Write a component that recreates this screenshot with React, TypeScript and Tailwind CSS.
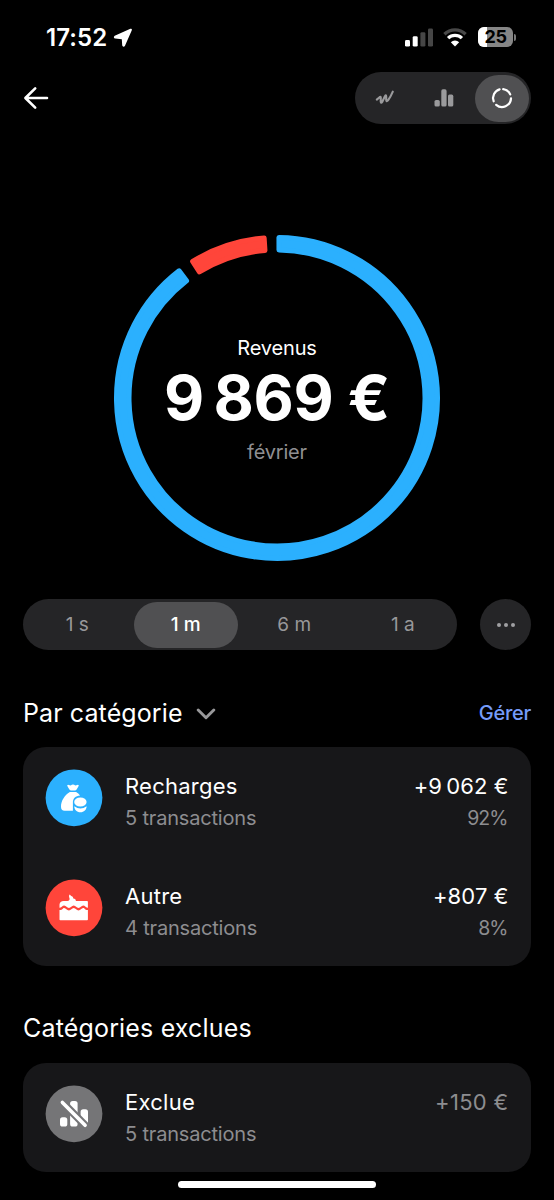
import type { ReactNode } from 'react'

const CX = 164
const CY = 164

function point(radius: number, degrees: number) {
  const a = (degrees * Math.PI) / 180
  return `${(CX + radius * Math.sin(a)).toFixed(2)} ${(CY - radius * Math.cos(a)).toFixed(2)}`
}

/* Ring segment, inset by the width of its rounded outline. */
function Segment({ from, to, color }: { from: number; to: number; color: string }) {
  const inset = 2.5
  const outer = 163 - inset
  const inner = 145.5 + inset
  const o = (inset / outer) * (180 / Math.PI)
  const i = (inset / inner) * (180 / Math.PI)
  const large = to - from > 180 ? 1 : 0
  const d = `M${point(outer, from + o)} A${outer} ${outer} 0 ${large} 1 ${point(outer, to - o)} L${point(inner, to - i)} A${inner} ${inner} 0 ${large} 0 ${point(inner, from + i)} Z`
  return <path d={d} fill={color} stroke={color} strokeWidth={inset * 2} strokeLinejoin="round" />
}

function StatusBar() {
  return (
    <div className="flex h-[72px] shrink-0 items-start justify-between pl-[46px] pr-[37px] pt-[22px]">
      <div className="flex items-center">
        <span className="w-[67px] pt-px text-[24px] leading-[30px] font-semibold tracking-[0.1px]">17:52</span>
        <svg width="20" height="20" viewBox="0 0 20 20">
          <path d="M17.8 1.8 2.2 8.8Q1.6 9.3 2.4 9.5L8.9 10.1Q9.8 10.2 9.9 11.1L10.3 17.2Q10.5 18 11 17.3Z" fill="white" stroke="white" strokeWidth="2.2" strokeLinejoin="round" />
        </svg>
      </div>
      <div className="flex items-center pt-[5px]">
        <svg width="28" height="19" viewBox="0 0 28 19">
          <rect x="0" y="12" width="5" height="6.6" rx="1.4" fill="white" />
          <rect x="7.7" y="8.2" width="5" height="10.4" rx="1.4" fill="white" />
          <rect x="15.4" y="4.2" width="5" height="14.4" rx="1.4" fill="#464646" />
          <rect x="23" y="0.6" width="5" height="18" rx="1.4" fill="#464646" />
        </svg>
        <svg width="24" height="19" viewBox="0 0 24 19" className="ml-[10px]" fill="none">
          <path d="M1.4 6.2A15.2 15.2 0 0 1 22.6 6.2" stroke="#484848" strokeWidth="3.3" />
          <path d="M5.1 10.2A9.8 9.8 0 0 1 18.9 10.2" stroke="white" strokeWidth="3.3" />
          <path d="M12 18.5 7.8 14.2A6 6 0 0 1 16.2 14.2Z" fill="white" />
        </svg>
        <div className="relative ml-[11px] flex h-[20px] w-[35px] items-center justify-center overflow-hidden rounded-[6px] bg-[#868686]">
          <span className="absolute inset-y-0 left-0 w-[9px] bg-white" />
          <span className="relative text-[18px] leading-[20px] font-bold tracking-[-0.3px] text-black">25</span>
        </div>
        <span className="ml-[1px] mr-px h-[7px] w-[2px] rounded-r-full bg-[#7a7a7a]" />
      </div>
    </div>
  )
}

function Toolbar() {
  return (
    <div className="flex h-[52px] shrink-0 items-center justify-between px-[23px]">
      <svg width="26" height="24" viewBox="0 0 26 24" fill="none" stroke="white" strokeWidth="2.6" strokeLinecap="round" strokeLinejoin="round">
        <path d="M24 12H2.6M12.2 2.3 2.4 12 12.2 21.7" />
      </svg>
      <div className="flex h-[52px] w-[176px] items-center rounded-full bg-[#252527] p-[2.5px]">
        <div className="flex flex-1 justify-center">
          <svg width="20" height="16" viewBox="0 0 20 16" fill="none" stroke="#9a9a9c" strokeWidth="2.1" strokeLinecap="round" strokeLinejoin="round" className="-ml-[4px]">
            <path d="M1.8 9.6 4.6 7.2Q5.9 6.2 5.8 8L5.7 11.6Q6 13.8 7.2 12L9.9 6.3Q11.2 4.3 11.2 6.6V9.8Q11.4 12.2 13 10.4 15.6 6.8 17.8 1.6" />
          </svg>
        </div>
        <div className="flex flex-1 justify-center">
          <svg width="20" height="18" viewBox="0 0 20 18" fill="#9a9a9c" className="-ml-[3px]">
            <rect x="0.5" y="11" width="5.3" height="6.6" rx="1.6" />
            <rect x="7.3" y="0.3" width="5.3" height="17.3" rx="1.6" />
            <rect x="14" y="5.6" width="5.3" height="12" rx="1.6" />
          </svg>
        </div>
        <div className="flex h-[47px] w-[54px] items-center justify-center rounded-full bg-[#505052]">
          <svg width="22" height="22" viewBox="0 0 22 22" fill="none" stroke="white" strokeWidth="2.2" strokeLinecap="round">
            <path d="M12.2 2.1A9 9 0 0 1 19.2 7.4" />
            <path d="M20 11.4A9 9 0 0 1 5.2 17.8" />
            <path d="M2.7 14.3A9 9 0 0 1 8.6 2.4" />
          </svg>
        </div>
      </div>
    </div>
  )
}

function Donut() {
  return (
    <div className="mx-auto mt-[109.5px] grid h-[328px] w-[328px] shrink-0 place-items-center">
      <svg width="328" height="328" viewBox="0 0 328 328" className="col-start-1 row-start-1">
        <Segment from={-0.2} to={323.3} color="#2bb0fe" />
        <Segment from={327.4} to={356.3} color="#ff453a" />
      </svg>
      <div className="col-start-1 row-start-1 flex flex-col items-center pt-[5px] whitespace-nowrap">
        <span className="text-[20px] leading-[26px] tracking-[-0.15px]">Revenus</span>
        <span className="text-[62px] leading-[74px] font-bold tracking-[-0.3px]">9&#8201;869 €</span>
        <span className="mt-[3px] text-[20px] leading-[28px] tracking-[-0.2px] text-[#8f8f92]">février</span>
      </div>
    </div>
  )
}

function RangePicker() {
  const options = ['1 s', '1 m', '6 m', '1 a']
  return (
    <div className="mt-[37.5px] flex h-[51px] shrink-0 justify-between px-[23px]">
      <div className="grid w-[434px] grid-cols-4 gap-[5px] rounded-full bg-[#252527] p-[2.5px] text-[19px] text-[#98989a]">
        {options.map((label) => (
          <div
            key={label}
            className={
              label === '1 m'
                ? 'flex items-center justify-center rounded-full bg-[#505052] pt-[2px] font-medium text-white'
                : 'flex items-center justify-center pt-[2px]'
            }
          >
            {label}
          </div>
        ))}
      </div>
      <div className="flex w-[51px] items-center justify-center gap-[3px] rounded-full bg-[#252527]">
        <span className="size-[4px] rounded-full bg-[#a0a0a2]" />
        <span className="size-[4px] rounded-full bg-[#a0a0a2]" />
        <span className="size-[4px] rounded-full bg-[#a0a0a2]" />
      </div>
    </div>
  )
}

type RowProps = {
  icon: ReactNode
  title: string
  count: string
  amount: string
  share?: string
  muted?: boolean
}

function Row({ icon, title, count, amount, share, muted }: RowProps) {
  return (
    <div className="flex h-[109.5px] items-start pl-[22px] pr-[22.5px] pt-[22px]">
      {icon}
      <div className="ml-[22px] flex flex-1 flex-col pt-[2px]">
        <span className="text-[22px] leading-[30px] tracking-[0.25px]">{title}</span>
        <span className="mt-[2px] text-[20px] leading-[30px] tracking-[-0.18px] text-[#8d8d90]">{count}</span>
      </div>
      <div className="flex flex-col items-end pt-[2px]">
        <span className={muted ? 'text-[22px] leading-[30px] tracking-[0.3px] text-[#8d8d90]' : 'text-[22px] leading-[30px] tracking-[0.1px]'}>{amount}</span>
        {share && <span className="mt-[2px] mr-[0.9px] text-[19.5px] leading-[30px] tracking-[-0.9px] text-[#8d8d90]">{share}</span>}
      </div>
    </div>
  )
}

function MoneyBag() {
  return (
    <svg width="58" height="58" viewBox="0 0 58 58" fill="white" className="shrink-0">
      <circle cx="29" cy="28.8" r="28.4" fill="#2bb0fe" />
      <path d="M22.9 18.1Q21.3 15.6 23.7 15.9L25.7 16.5Q28 14.5 30.3 16.5L32.3 15.9Q34.7 15.6 33.1 18.1L31.6 20.6Q31.2 21.4 30.2 21.4H25.8Q24.8 21.4 24.4 20.6Z" />
      <path d="M24.9 22.9H31.1C32.7 23.8 34 24.9 35.1 26.4 30.6 26.7 27.9 29.4 27.9 33.4V41.7H19.6Q16 41.7 16 37.7C16 31.8 19.5 26.1 24.9 22.9Z" />
      <ellipse cx="35.4" cy="33" rx="6.2" ry="4.6" />
      <path d="M29.3 37.2Q35.4 41.9 41.6 37.2C41.7 40.6 38.9 43.2 35.4 43.2S29.2 40.6 29.3 37.2Z" />
    </svg>
  )
}

function Cake() {
  return (
    <svg width="58" height="58" viewBox="0 0 58 58" fill="white" className="shrink-0">
      <circle cx="29" cy="28.8" r="28.4" fill="#ff453a" />
      <g transform="translate(13.7 15)">
        <path d="M.8 13.7V10.6Q1.2 7.2 5 7.1H8.6C10.6 6.6 11.2 5.4 10.8 4.2 10.1 2.7 10.1 1.2 11.2.6 11.8 2.5 14.6 2 14.6 4.6 16.4 4.6 17.2 5.5 17.2 7.1H28.4Q29.2 7.1 29.2 7.9V13.7C26.9 14 26.4 11.6 24.5 11.6S21.8 14 19.8 14 17 11.6 15 11.6 12.2 14 10.2 14 7.5 11.6 5.5 11.6 3.1 14 .8 13.7Z" />
        <path d="M.8 16C4 16.2 3.8 13.9 5.5 13.9S8 16.4 10.2 16.4 13 13.9 15 13.9 17.8 16.4 19.8 16.4 22.7 13.9 24.5 13.9 26 16.2 29.2 16V25.4Q29.2 26.2 28.4 26.2H1.6Q.8 26.2 .8 25.4Z" />
      </g>
    </svg>
  )
}

function HiddenChart() {
  return (
    <svg width="58" height="58" viewBox="0 0 58 58" className="shrink-0">
      <circle cx="29" cy="28.8" r="28.4" fill="#757577" />
      <g fill="white">
        <rect x="15" y="32.3" width="7.3" height="9.2" rx="2.6" />
        <rect x="25.1" y="15.9" width="7.5" height="25.6" rx="2.6" />
        <rect x="35.6" y="24.3" width="7.4" height="17.2" rx="2.6" />
      </g>
      <path d="M14.8 14.8 42.6 42.8" stroke="#757577" strokeWidth="7.6" />
      <path d="M17.4 17.4 40.1 40.3" stroke="white" strokeWidth="3.6" strokeLinecap="round" />
    </svg>
  )
}

export default function App() {
  return (
    <div className="flex h-[1200px] w-[554px] flex-col overflow-hidden bg-black font-['Inter',sans-serif] text-white">
      <StatusBar />
      <Toolbar />
      <Donut />
      <RangePicker />
      <div className="mt-[45px] flex h-[36px] shrink-0 items-center px-[23px]">
        <h2 className="text-[25px] leading-[36px] tracking-[0.1px]">Par catégorie</h2>
        <svg width="20" height="12" viewBox="0 0 20 12" fill="none" stroke="#98989a" strokeWidth="2.9" strokeLinecap="round" strokeLinejoin="round" className="ml-[13px] mt-[2px]">
          <path d="M2.2 2 10 9.7 17.8 2" />
        </svg>
        <span className="ml-auto text-[20px] font-medium tracking-[-0.25px] text-[#759cf9]">Gérer</span>
      </div>
      <div className="mx-[23px] mt-[16px] h-[219px] shrink-0 rounded-[23px] bg-[#171719]">
        <Row icon={<MoneyBag />} title="Recharges" count="5 transactions" amount={'+9\u2009062 €'} share="92%" />
        <Row icon={<Cake />} title="Autre" count="4 transactions" amount="+807 €" share="8%" />
      </div>
      <h2 className="mt-[44px] shrink-0 px-[23px] text-[25px] leading-[36px] tracking-[0.17px]">Catégories exclues</h2>
      <div className="mx-[23px] mt-[16.7px] h-[109px] shrink-0 rounded-[23px] bg-[#171719]">
        <Row icon={<HiddenChart />} title="Exclue" count="5 transactions" amount="+150 €" muted />
      </div>
      <div className="mx-auto mt-[9.5px] h-[7px] w-[198px] shrink-0 rounded-full bg-white" />
    </div>
  )
}
